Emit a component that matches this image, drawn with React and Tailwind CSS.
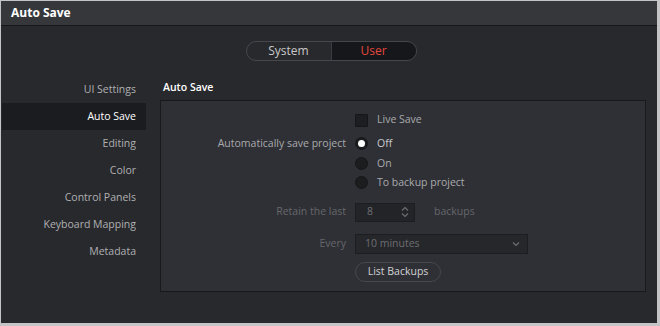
import { useState } from 'react';

const NAV = ['UI Settings', 'Auto Save', 'Editing', 'Color', 'Control Panels', 'Keyboard Mapping', 'Metadata'];

function Radio({ checked }) {
  return (
    <span className="w-[13px] h-[13px] rounded-full bg-[#1c1d1f] border border-[#151618] flex items-center justify-center">
      {checked && <span className="w-[7px] h-[7px] rounded-full bg-white" />}
    </span>
  );
}

export default function App() {
  const [mode, setMode] = useState('User');
  const [sel, setSel] = useState('Auto Save');

  return (
    <div className="w-[660px] h-[326px] bg-[#c4c4c6] pl-px pt-px" style={{ fontFamily: '"Open Sans", "Noto Sans", sans-serif' }}>
      <div className="w-[656px] h-[322px] bg-[#28292d] flex flex-col">
        {/* Title bar */}
        <div className="h-[25px] bg-[#35373b] border-b border-[#161719] flex items-center px-[10px] shrink-0">
          <span className="text-[12px] font-bold text-white">Auto Save</span>
        </div>

        {/* Segmented */}
        <div className="flex justify-center pt-[15px] pl-[4px]">
          <div className="flex h-[20px] w-[171px] rounded-full border border-[#46474c] overflow-hidden text-[12px]">
            {['System', 'User'].map(m => (
              <button
                key={m}
                onClick={() => setMode(m)}
                className={`flex-1 flex items-center justify-center ${
                  mode === m ? 'bg-[#16171a] text-[#e5473d]' : 'text-[#c8c8c8]'
                } ${m === 'User' ? 'border-l border-[#3a3b40]' : ''}`}
              >
                {m}
              </button>
            ))}
          </div>
        </div>

        <div className="flex mt-[15px]">
          {/* Sidebar */}
          <nav className="w-[145px] pl-[1px] flex flex-col text-[10.5px]">
            {NAV.map(n => (
              <button
                key={n}
                onClick={() => setSel(n)}
                className={`h-[27px] pr-[10px] text-right ${
                  sel === n ? 'bg-[#1b1c1f] text-white' : 'text-[#b0b0b2]'
                }`}
              >
                {n}
              </button>
            ))}
          </nav>

          {/* Content */}
          <div className="flex flex-col ml-[14px]">
            <div className="h-[24px] flex items-center pl-[3px] text-[10.5px] font-semibold text-white">Auto Save</div>
            <div className="w-[486px] h-[192px] bg-[#2f3035] border border-[#18191b] text-[10.5px]">
              <div className="grid grid-cols-[185px_1fr] gap-x-[9px] pt-[12px]">
                <div />
                <div className="flex items-center gap-[9px] h-[14px]">
                  <span className="w-[13px] h-[13px] bg-[#1d1e21] border border-[#151618] rounded-[1px]" />
                  <span className="text-[#a9aaad]">Live Save</span>
                </div>

                <div className="text-right text-[#a9aaad] h-[21px] flex items-center justify-end mt-[6px]">Automatically save project</div>
                <div className="flex items-center gap-[9px] h-[21px] mt-[6px]">
                  <Radio checked />
                  <span className="text-[#c9c9cb]">Off</span>
                </div>

                <div />
                <div className="flex items-center gap-[9px] h-[19px]">
                  <Radio />
                  <span className="text-[#a9aaad]">On</span>
                </div>

                <div />
                <div className="flex items-center gap-[9px] h-[19px]">
                  <Radio />
                  <span className="text-[#a9aaad]">To backup project</span>
                </div>

                <div className="text-right text-[#66676b] h-[20px] flex items-center justify-end mt-[10px]">Retain the last</div>
                <div className="flex items-center h-[20px] mt-[10px]">
                  <div className="w-[60px] h-[19px] bg-[#232428] border border-[#1c1d20] flex items-center justify-between pl-[11px] pr-[4px]">
                    <span className="text-[#6d6e72]">8</span>
                    <svg width="10" height="14" viewBox="0 0 10 14" fill="none" stroke="#6d6e72" strokeWidth="1.2">
                      <path d="M2 5.5 L5 2.5 L8 5.5" />
                      <path d="M2 8.5 L5 11.5 L8 8.5" />
                    </svg>
                  </div>
                  <span className="ml-[19px] text-[#66676b]">backups</span>
                </div>

                <div className="text-right text-[#66676b] h-[20px] flex items-center justify-end mt-[12px]">Every</div>
                <div className="flex items-center h-[20px] mt-[12px]">
                  <div className="w-[173px] h-[20px] bg-[#26272b] border border-[#1c1d20] flex items-center justify-between pl-[9px] pr-[6px]">
                    <span className="text-[#6d6e72]">10 minutes</span>
                    <svg width="10" height="8" viewBox="0 0 10 8" fill="none" stroke="#6d6e72" strokeWidth="1.2">
                      <path d="M2 2.5 L5 5.5 L8 2.5" />
                    </svg>
                  </div>
                </div>

                <div />
                <div className="flex items-center mt-[8px]">
                  <button className="w-[86px] h-[20px] rounded-full border border-[#47484d] text-[#d2d2d4] text-[10.5px] flex items-center justify-center">
                    List Backups
                  </button>
                </div>
              </div>
            </div>
          </div>
        </div>
      </div>
    </div>
  );
}
